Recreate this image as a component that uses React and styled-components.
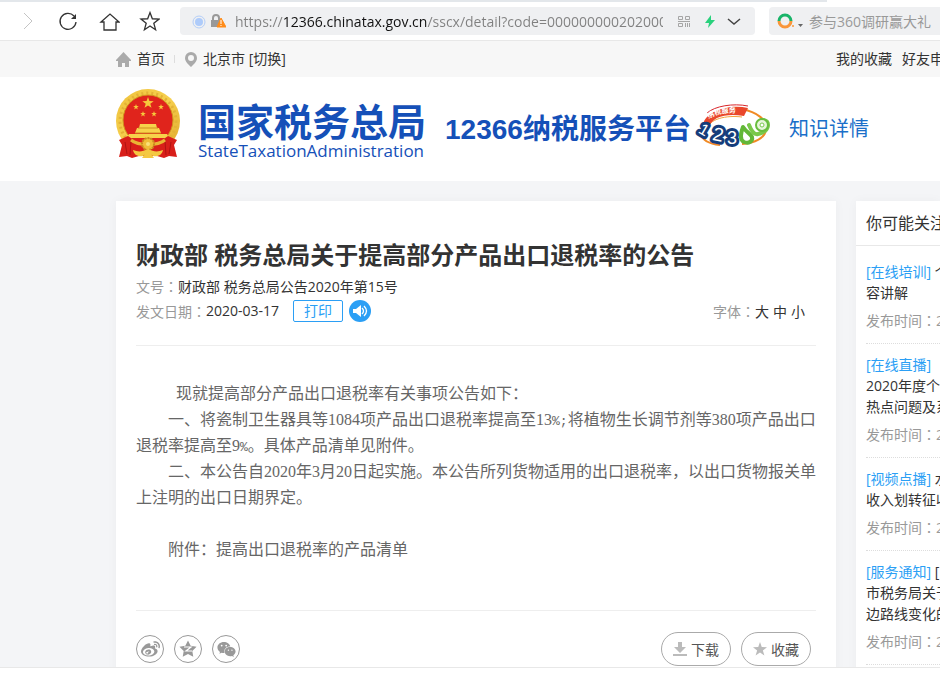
import React from 'react';
import styled, { createGlobalStyle } from 'styled-components';
import { FaWeibo, FaWeixin } from 'react-icons/fa';

const sans = `"Open Sans", "Noto Sans CJK SC", sans-serif`;
const labelFont = `"Open Sans", "Noto Sans CJK JP", sans-serif`;

const related = [
    { tag: '[在线培训]', lines: ['个', '容讲解'] },
    { tag: '[在线直播]', lines: ['', '2020年度个', '热点问题及系'] },
    { tag: '[视频点播]', lines: ['水', '收入划转征收'] },
    { tag: '[服务通知]', lines: ['[', '市税务局关于', '边路线变化的'] },
];

const starPoints = (cx, cy, r, inner = 0.4) => {
    const points = [];
    for (let i = 0; i < 10; i++) {
        const radius = i % 2 ? r * inner : r;
        const angle = (Math.PI / 5) * i - Math.PI / 2;
        points.push(`${(cx + radius * Math.cos(angle)).toFixed(2)},${(cy + radius * Math.sin(angle)).toFixed(2)}`);
    }
    return points.join(' ');
};

const Emblem = () => (
    <EmblemSvg width="66" height="70" viewBox="0 0 66 70" aria-hidden="true">
        <defs>
            <linearGradient id="gold" x1="0" y1="0" x2="1" y2="1">
                <stop offset="0" stopColor="#efc23c" />
                <stop offset=".5" stopColor="#f6d04e" />
                <stop offset="1" stopColor="#dfa62a" />
            </linearGradient>
        </defs>
        <circle cx="33" cy="32" r="32" fill="url(#gold)" />
        <circle cx="33" cy="32" r="28" fill="none" stroke="#e3b236" strokeWidth="3" strokeDasharray="2 3" />
        <circle cx="33" cy="31" r="25" fill="#e0241c" stroke="#d0951f" />
        <polygon points={starPoints(33, 14, 6)} fill="#f6c83c" />
        <polygon points={starPoints(21, 18, 3)} fill="#f6c83c" />
        <polygon points={starPoints(46, 18, 3)} fill="#f6c83c" />
        <polygon points={starPoints(28, 25, 3)} fill="#f6c83c" />
        <polygon points={starPoints(39, 25, 3)} fill="#f6c83c" />
        <path d="M25 35h16l1 4h-18zM22 39h22l2 5H20zM14 45h38l2 4H12z" fill="#f7d24a" />
        <path d="M23 39h20M20 44h26" stroke="#cf8f20" />
        <path d="M4 51l9-4 10 7 10 2 10-2 10-7 9 4-3 5 3 12-8-1-5 2-7-2H24l-7 2-5-2-8 1 3-12z" fill="#d81f1a" />
        <path d="M10 53l2 12M16 52l-1 14M56 53l-2 12M50 52l1 14" stroke="#b01312" />
        <path d="M16 51c7 6 27 6 34 0" fill="none" stroke="#e9b534" strokeWidth="3" />
        <circle cx="33" cy="55" r="6" fill="#efbd38" stroke="#c98a1e" strokeWidth="2" strokeDasharray="2 1" />
        <circle cx="33" cy="55" r="2" fill="#fae07a" />
        <path d="M18 61c5 2 9 2 15-1 6 3 10 3 15 1-1 5-5 7-10 6l-3-2h-4l-3 2c-5 1-9-1-10-6z" fill="#f4c842" />
        <path d="M27 69l3-4h6l3 4z" fill="#f4c842" />
    </EmblemSvg>
);

const ServiceMark = () => (
    <svg width="76" height="46" viewBox="0 0 76 46" aria-hidden="true">
        <path d="M46 5c17 3 26 11 25 21-1 8-11 13-24 14M5 29c2 7 10 11 20 12" fill="none" stroke="#f08a24" strokeWidth="2" />
        <path d="M12 25C14 15 31 11 47 13" fill="none" stroke="#f4a23c" />
        <path d="M8 23C7 9 32-1 53 4l-4 8C33 9 16 12 14 24z" fill="#e9472b" />
        <path d="M12 9C20 2 38-1 53 2" fill="none" stroke="#d9262a" />
        <path id="arcText" d="M14 15C22 9 36 7 52 11" fill="none" />
        <text fontSize="7" fontWeight="bold" fill="#fff" fontFamily="Noto Sans CJK SC">
            <textPath href="#arcText">纳税服务</textPath>
        </text>
        <g fontFamily="Liberation Sans" fill="#fff" stroke="#153d7b" strokeWidth="6" strokeLinejoin="round" paintOrder="stroke">
            <text x="5" y="31" fontSize="16" transform="rotate(30 9 25)">1</text>
            <text x="18" y="37" fontSize="19" transform="rotate(12 23 30)">2</text>
            <text x="32" y="40" fontSize="18">3</text>
        </g>
        <path d="M48 23c-3 8-3 13 1 15 5 2 9-1 8-5-1-3-6-5-9-10z" fill="#fff" stroke="#62b737" strokeWidth="4" strokeLinejoin="round" />
        <path d="M54 21c2 5 5 10 9 9 5-1 10-4 10-9s-7-7-9-2" fill="#fff" stroke="#79c84a" strokeWidth="4" strokeLinecap="round" />
        <circle cx="67" cy="21" r="6" fill="#e6f6d9" stroke="#68bd3d" strokeWidth="2" />
        <circle cx="67" cy="21" r="2" fill="#fff" stroke="#79c84a" />
    </svg>
);

const App = () => (
    <>
        <GlobalStyle />
        <Window>
            <TabStrip />
            <Toolbar>
                <Nav>
                    <ToolButton aria-label="前进">
                        <svg width="22" height="22" viewBox="0 0 22 22" fill="none" stroke="#c4c4c4"><path d="M6 3l8 8-8 8" /></svg>
                    </ToolButton>
                    <ToolButton aria-label="刷新">
                        <svg width="22" height="22" viewBox="0 0 22 22" fill="none" stroke="#333" strokeWidth="1.3">
                            <path d="M16 6a8 8 0 1 0 2 6" /><path d="M18 4v5h-5z" fill="#333" stroke="none" />
                        </svg>
                    </ToolButton>
                    <ToolButton aria-label="主页">
                        <svg width="22" height="22" viewBox="0 0 22 22" fill="none" stroke="#333" strokeWidth="1.3">
                            <path d="M3 12l9-8 9 8h-3v8H6v-8z" />
                        </svg>
                    </ToolButton>
                    <ToolButton aria-label="收藏">
                        <svg width="22" height="22" viewBox="0 0 22 22" fill="none" stroke="#333" strokeWidth="1.3">
                            <polygon points={starPoints(12, 12, 9.5, 0.42)} />
                        </svg>
                    </ToolButton>
                </Nav>
                <AddressBar>
                    <svg width="34" height="16" viewBox="0 0 34 16">
                        <circle cx="7" cy="9" r="6" fill="none" stroke="#b4cef8" />
                        <circle cx="7" cy="9" r="4" fill="#aecbfa" />
                        <path d="M21 7V5a3 3 0 0 1 6 0v2" fill="none" stroke="#999" strokeWidth="2" />
                        <path d="M19 7h9v7h-9z" fill="#999" />
                        <path d="M29 5l5 9h-9z" fill="#ff8c1a" stroke="#ff8c1a" strokeLinejoin="round" />
                        <path d="M29 7v4M29 12v1" stroke="#fff" />
                    </svg>
                    <AddressInput aria-label="地址" defaultValue="https://12366.chinatax.gov.cn/sscx/detail?code=000000000202000" />
                    <svg width="64" height="16" viewBox="0 0 64 16" fill="none">
                        <path d="M1.500 3.500h4v3h-4zM8.500 3.500h4v3h-4zM1.500 10.500h4v3h-4zM8.500 10v4M10.500 10v4M12.500 10v4M1 8.500h12" stroke="#a5a5a5" />
                        <path d="M34 2l-6 8h4l-1 5 7-8h-4z" fill="#28d17c" />
                        <path d="M51 6l6 5 6-5" stroke="#444" strokeWidth="1.5" />
                    </svg>
                </AddressBar>
                <SearchBar>
                    <svg width="28" height="18" viewBox="0 0 28 18" fill="none">
                        <path d="M2 9a6 6 0 0 1 12 0" stroke="#19b469" strokeWidth="3" />
                        <path d="M2 9a6 6 0 0 0 12 0" stroke="#f9963a" strokeWidth="3" />
                        <circle cx="16" cy="14" r="1" fill="#f9963a" />
                        <path d="M21 12h5l-2.500 3z" fill="#666" />
                    </svg>
                    <SearchInput aria-label="搜索" placeholder="参与360调研赢大礼" />
                </SearchBar>
            </Toolbar>

            <Page>
                <SiteBar>
                    <SiteLink href="#home">
                        <svg width="15" height="15" viewBox="0 0 15 15" fill="#aaa"><path d="M7.500 0L15 8v1h-2v6H9v-4H6v4H2V9H0V8z" /></svg>
                        首页
                    </SiteLink>
                    <Divider />
                    <SiteLink href="#city">
                        <svg width="12" height="15" viewBox="0 0 12 15" fill="#aaa" fillRule="evenodd">
                            <path d="M6 0a6 6 0 0 0-6 6c0 4 4 7 6 9 2-2 6-5 6-9a6 6 0 0 0-6-6zm0 3a3 3 0 1 1 0 6 3 3 0 0 1 0-6z" />
                        </svg>
                        北京市 [切换]
                    </SiteLink>
                    <UserLinks>
                        <SiteLink href="#favorites">我的收藏</SiteLink>
                        <SiteLink href="#friends">好友申</SiteLink>
                    </UserLinks>
                </SiteBar>

                <Header>
                    <Emblem />
                    <Brand>
                        <BrandName>国家税务总局</BrandName>
                        <BrandLatin>StateTaxationAdministration</BrandLatin>
                    </Brand>
                    <Platform>12366纳税服务平台</Platform>
                    <ServiceMark />
                    <Section>知识详情</Section>
                </Header>

                <Columns>
                    <Article>
                        <Title>财政部 税务总局关于提高部分产品出口退税率的公告</Title>
                        <Meta><Label>文号：</Label>财政部 税务总局公告2020年第15号</Meta>
                        <Meta>
                            <Label>发文日期：</Label>2020-03-17
                            <PrintButton>打印</PrintButton>
                            <SpeakButton aria-label="朗读">
                                <svg width="22" height="22" viewBox="0 0 22 22">
                                    <circle cx="11" cy="11" r="11" fill="#2b9ff5" />
                                    <path d="M4 9h3l5-4v12l-5-4H4z" fill="#fff" />
                                    <path d="M13 8q3 3 0 6M15 6q5 5 0 10" fill="none" stroke="#fff" strokeWidth="1.3" />
                                </svg>
                            </SpeakButton>
                            <FontSizes>
                                <Label>字体：</Label>
                                <SizeButton>大</SizeButton>
                                <SizeButton>中</SizeButton>
                                <SizeButton>小</SizeButton>
                            </FontSizes>
                        </Meta>
                        <Content>
                            <Paragraph $indent={40}>现就提高部分产品出口退税率有关事项公告如下：</Paragraph>
                            <Paragraph>一、将瓷制卫生器具等1084项产品出口退税率提高至13<Half>%;</Half>将植物生长调节剂等380项产品出口退税率提高至9<Half>%</Half>。具体产品清单见附件。</Paragraph>
                            <Paragraph>二、本公告自2020年3月20日起实施。本公告所列货物适用的出口退税率，以出口货物报关单上注明的出口日期界定。</Paragraph>
                            <Paragraph $spaced>附件：提高出口退税率的产品清单</Paragraph>
                        </Content>
                        <Actions>
                            <ShareButton aria-label="微博"><FaWeibo size={19} /></ShareButton>
                            <ShareButton aria-label="QQ空间">
                                <svg width="18" height="18" viewBox="0 0 18 18">
                                    <polygon points={starPoints(9, 9.5, 9, 0.5)} fill="#999" />
                                    <path d="M5 7h7l-5 4h6" fill="none" stroke="#fff" strokeWidth="1.2" />
                                </svg>
                            </ShareButton>
                            <ShareButton aria-label="微信"><FaWeixin size={19} /></ShareButton>
                            <ActionButtons>
                                <ActionButton>
                                    <svg width="14" height="14" viewBox="0 0 14 14" fill="#bbb"><path d="M5 0h4v5h4l-6 6-6-6h4zM0 12h14v2H0z" /></svg>
                                    下载
                                </ActionButton>
                                <ActionButton>
                                    <svg width="14" height="14" viewBox="0 0 14 14" fill="#bbb"><polygon points={starPoints(7, 7.5, 7.5)} /></svg>
                                    收藏
                                </ActionButton>
                            </ActionButtons>
                        </Actions>
                    </Article>

                    <Sidebar>
                        <SidebarTitle>你可能关注</SidebarTitle>
                        <RelatedList>
                            {related.map(item => (
                                <RelatedItem key={item.tag}>
                                    <RelatedLink href="#detail">
                                        <Tag>{item.tag}</Tag>{' '}
                                        {item.lines.map((line, i) => (
                                            <React.Fragment key={i}>{i > 0 && <br />}{line}</React.Fragment>
                                        ))}
                                    </RelatedLink>
                                    <Published>发布时间：2</Published>
                                </RelatedItem>
                            ))}
                        </RelatedList>
                    </Sidebar>
                </Columns>
            </Page>
            <StatusBar />
        </Window>
    </>
);

export default App;

const GlobalStyle = createGlobalStyle`
    * {
        box-sizing: border-box;
    }

    body {
        margin: 0;
        background: #fff;
        color: #333;
        font-family: ${sans};
        font-size: 14px;
    }

    button, input {
        font: inherit;
        color: inherit;
        border: 0;
        padding: 0;
        background: none;
        outline: none;
    }

    button {
        cursor: pointer;
    }

    a {
        color: inherit;
        text-decoration: none;
    }

    svg {
        display: block;
        flex-shrink: 0;
    }
`;

const Window = styled.div`
    display: flex;
    flex-direction: column;
    height: 100vh;
    overflow: hidden;
`;

const TabStrip = styled.div`
    flex: 0 0 2px;
    margin-right: 12%;
    background: #e3e7eb;
`;

const Toolbar = styled.div`
    display: flex;
    align-items: center;
    flex: 0 0 39px;
    border-bottom: 1px solid #e8e8e8;
`;

const Nav = styled.div`
    display: flex;
    gap: 18px;
    width: 180px;
    padding-left: 18px;
`;

const ToolButton = styled.button`
    width: 22px;
    height: 22px;
`;

const AddressBar = styled.div`
    display: flex;
    align-items: center;
    flex: 1;
    min-width: 0;
    height: 28px;
    padding: 0 14px 0 12px;
    border-radius: 4px;
    background: #eff0f2;
`;

/* the host part of the address is darker than the rest */
const AddressInput = styled.input`
    flex: 1;
    min-width: 0;
    height: 28px;
    margin: 0 14px 0 9px;
    font-size: 14px;
    color: transparent;
    background: linear-gradient(90deg, #808080 48px, #111 48px 192px, #808080 192px);
    background-clip: text;
`;

const SearchBar = styled.div`
    display: flex;
    align-items: center;
    gap: 4px;
    width: 171px;
    height: 28px;
    margin-left: 14px;
    padding-left: 8px;
    border-radius: 4px 0 0 4px;
    background: #eff0f2;
`;

const SearchInput = styled.input`
    flex: 1;
    min-width: 0;

    &::placeholder {
        color: #999;
        opacity: 1;
    }
`;

const Page = styled.div`
    display: flex;
    flex-direction: column;
    flex: 1;
    min-height: 0;
    overflow: hidden;
    background: #f4f5f7;
`;

const SiteBar = styled.div`
    display: flex;
    align-items: center;
    flex: 0 0 36px;
    padding-left: 116px;
    background: #f7f7f7;
`;

const SiteLink = styled.a`
    display: flex;
    align-items: center;
    gap: 6px;
    line-height: 18px;
    white-space: nowrap;
`;

const Divider = styled.span`
    width: 1px;
    height: 8px;
    margin: 0 10px 0 9px;
    background: #ddd;
`;

const UserLinks = styled.div`
    display: flex;
    gap: 10px;
    width: 104px;
    margin-left: auto;
    overflow: hidden;
`;

const Header = styled.header`
    display: flex;
    align-items: center;
    flex: 0 0 104px;
    padding: 0 20px 4px 115px;
    background: #fff;
    white-space: nowrap;
`;

const EmblemSvg = styled.svg`
    margin-bottom: 6px;
`;

const Brand = styled.div`
    margin: 0 19px 0 17px;
    padding-top: 5px;
    color: #1550b8;
`;

const BrandName = styled.div`
    font-size: 38px;
    font-weight: bold;
    line-height: 42px;
`;

const BrandLatin = styled.div`
    font-size: 17px;
    line-height: 18px;
`;

const Platform = styled.div`
    margin-right: 4px;
    font-family: "Liberation Sans", "Noto Sans CJK SC", sans-serif;
    font-size: 28px;
    font-weight: bold;
    color: #1550b8;
`;

const Section = styled.div`
    margin-left: 18px;
    font-size: 20px;
    color: #1a6fc9;
`;

const Columns = styled.div`
    display: grid;
    grid-template-columns: minmax(0, 1fr) 84px;
    gap: 20px;
    padding: 20px 0 0 116px;
`;

const Article = styled.article`
    padding: 36px 20px 20px;
    background: #fff;
    box-shadow: 0 0 10px rgba(0, 0, 0, 0.04);
`;

const Title = styled.h1`
    margin: 0;
    font-size: 24px;
    line-height: 36px;
`;

const Meta = styled.div`
    display: flex;
    align-items: center;
    height: 25px;
`;

const Label = styled.span`
    font-family: ${labelFont};
    color: #999;
`;

const PrintButton = styled.button`
    width: 50px;
    height: 22px;
    margin: 0 6px 0 14px;
    line-height: 20px;
    border: 1px solid #2b9ff5;
    border-radius: 2px;
    color: #2b9ff5;
`;

const SpeakButton = styled.button`
    width: 22px;
    height: 22px;
`;

const FontSizes = styled.div`
    display: flex;
    margin: 0 11px 0 auto;
`;

const SizeButton = styled.button`
    & + & {
        margin-left: 4px;
    }
`;

const Content = styled.div`
    margin-top: 22px;
    padding: 35px 0 47px;
    border: solid #eee;
    border-width: 1px 0;
    font-family: "Liberation Serif", "Noto Sans CJK SC", serif;
    font-size: 16px;
    line-height: 26px;
    color: #666;
`;

const Paragraph = styled.p`
    margin: ${({ $spaced }) => ($spaced ? '26px' : '0')} 0 0;
    text-indent: ${({ $indent = 32 }) => $indent}px;
`;

const Half = styled.span`
    font-family: "Liberation Mono", monospace;
    font-size: 13px;
    line-height: 1;
`;

const Actions = styled.div`
    display: flex;
    align-items: center;
    gap: 10px;
    padding-top: 21px;
`;

const ShareButton = styled.button`
    display: flex;
    align-items: center;
    justify-content: center;
    width: 28px;
    height: 28px;
    border: 1px solid #999;
    border-radius: 50%;
    color: #999;
`;

const ActionButtons = styled.div`
    display: flex;
    gap: 10px;
    margin: 0 5px 0 auto;
`;

const ActionButton = styled.button`
    display: flex;
    align-items: center;
    justify-content: center;
    gap: 4px;
    width: 70px;
    height: 34px;
    border: 1px solid #aaa;
    border-radius: 17px;
    color: #555;
`;

const Sidebar = styled.aside`
    overflow: hidden;
    background: #fff;
    box-shadow: 0 0 10px rgba(0, 0, 0, 0.04);
    white-space: nowrap;
`;

const SidebarTitle = styled.h2`
    margin: 0;
    padding-left: 10px;
    border-bottom: 1px solid #e8e8e8;
    font-size: 16px;
    font-weight: normal;
    line-height: 44px;
`;

const RelatedList = styled.ul`
    margin: 0;
    padding: 5px 0 0 10px;
    list-style: none;
`;

const RelatedItem = styled.li`
    padding: 10px 0 12px;
    border-bottom: 1px dotted #ddd;
    line-height: 21px;
`;

const RelatedLink = styled.a`
    display: block;
`;

const Tag = styled.span`
    color: #2b9ff5;
`;

const Published = styled.div`
    margin-top: 7px;
    font-family: ${labelFont};
    color: #999;
`;

const StatusBar = styled.div`
    flex: 0 0 6px;
    border-top: 1px solid #e8e8e8;
    background: #fff;
`;
